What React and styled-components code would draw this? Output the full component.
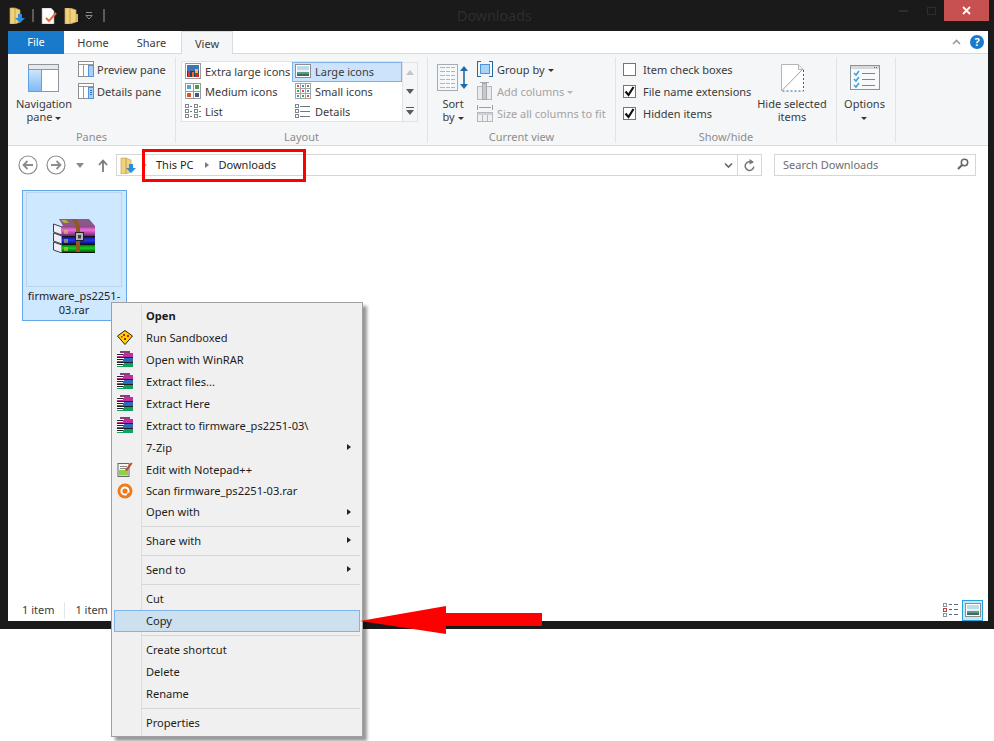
import React from "react";
import styled, { createGlobalStyle } from "styled-components";

const GlobalStyle = createGlobalStyle`
  html, body {
    margin: 0;
    background: #fff;
  }
  body {
    font-family: "Noto Sans", "Open Sans", sans-serif;
    font-size: 11px;
    color: #2b2b2b;
  }
`;

const Page = styled.div`
  position: relative;
  width: 994px;
  height: 741px;
  overflow: hidden;
  background: #fff;
`;

const Win = styled.div`
  display: flex;
  flex-direction: column;
  box-sizing: border-box;
  width: 994px;
  height: 629px;
  padding: 0 6px 8px 8px;
  background: #1a1a1a;
`;

const TitleBar = styled.div`
  display: flex;
  align-items: flex-start;
  height: 31px;
  flex: none;
`;

const Qat = styled.div`
  display: flex;
  align-items: center;
  gap: 7px;
  width: 449px;
  height: 31px;
  padding-left: 1px;
  box-sizing: border-box;
`;

const QatBar = styled.span`
  width: 2px;
  height: 13px;
  background: #5a5a5a;
  margin: 0 ${(p) => p.$gap || 0}px;
`;

const WinTitle = styled.div`
  font-size: 14.3px;
  line-height: 31px;
  color: #2e2e2e;
  flex: 1;
`;

const WinButtons = styled.div`
  display: flex;
  margin-right: -1px;
`;

const WinBtn = styled.div`
  display: flex;
  align-items: center;
  justify-content: center;
  width: ${(p) => p.$w}px;
  height: 21px;
  background: ${(p) => p.$bg || "transparent"};
`;

const Body = styled.div`
  display: flex;
  flex-direction: column;
  flex: 1;
  min-height: 0;
  background: #fff;
`;

const Tabs = styled.div`
  display: flex;
  align-items: stretch;
  height: 23px;
  flex: none;
  box-sizing: border-box;
  border-bottom: 1px solid #dadbdc;
`;

const FileTab = styled.div`
  width: 56px;
  height: 23px;
  background: #1979ca;
  color: #fff;
  text-align: center;
  line-height: 22px;
`;

const Tab = styled.div`
  box-sizing: border-box;
  width: ${(p) => p.$w}px;
  height: 23px;
  text-align: center;
  line-height: 24px;
  color: #3b3b3b;
  ${(p) =>
    p.$active &&
    `
    background: #f5f6f7;
    border: 1px solid #dadbdc;
    border-bottom: none;
  `}
`;

const TabEnd = styled.div`
  margin-left: auto;
  display: flex;
  align-items: center;
  gap: 9px;
  padding-right: 4px;
  height: 22px;
`;

const Help = styled.span`
  display: block;
  width: 14px;
  height: 14px;
  border-radius: 50%;
  background: #1979ca;
  color: #fff;
  font-size: 11px;
  font-weight: 700;
  line-height: 14px;
  text-align: center;
`;

const Ribbon = styled.div`
  display: flex;
  height: 92px;
  flex: none;
  box-sizing: border-box;
  padding-top: 3px;
  background: #f5f6f7;
  border-bottom: 1px solid #dadbdc;
`;

const Group = styled.div`
  display: flex;
  flex-direction: column;
  box-sizing: border-box;
  width: ${(p) => p.$w}px;
  height: 86px;
  border-right: 1px solid #e1e3e6;
`;

const GroupBody = styled.div`
  display: flex;
  flex: 1;
  padding: 2px 0 0 ${(p) => p.$pl || 0}px;
  gap: ${(p) => p.$gap || 0}px;
`;

const GroupLabel = styled.div`
  height: 12px;
  margin-top: ${(p) => (p.$push ? "auto" : 0)};
  line-height: 12px;
  text-align: center;
  color: #8d8d8d;
`;

const BigBtn = styled.div`
  display: flex;
  flex-direction: column;
  align-items: center;
  width: ${(p) => p.$w}px;
  flex: none;
  padding-top: ${(p) => p.$top ?? 5}px;
  box-sizing: border-box;
  color: #3b3b3b;
  line-height: 13px;
  text-align: center;
`;

const BigIcon = styled.div`
  height: 28px;
  margin-bottom: ${(p) => p.$mb ?? 5}px;
  display: flex;
  align-items: flex-start;
`;

const BigText = styled.div`
  white-space: nowrap;
`;

const Caret = styled.span`
  display: inline-block;
  width: 0;
  height: 0;
  margin-left: ${(p) => p.$ml ?? 3}px;
  vertical-align: middle;
  border-left: 3px solid transparent;
  border-right: 3px solid transparent;
  border-top: 3px solid ${(p) => p.$color || "#333"};
`;

const SmallCol = styled.div`
  display: flex;
  flex-direction: column;
  width: ${(p) => p.$w || "auto"};
`;

const SmallRow = styled.div`
  display: flex;
  align-items: center;
  gap: ${(p) => p.$gap ?? 3}px;
  box-sizing: border-box;
  height: 22px;
  padding-bottom: 2px;
  color: ${(p) => (p.$off ? "#a3a3a3" : "#3b3b3b")};
  white-space: nowrap;
`;

const CheckBox = styled.span`
  display: flex;
  align-items: center;
  justify-content: center;
  box-sizing: border-box;
  width: 13px;
  height: 13px;
  background: #fff;
  border: 1px solid #70757f;
`;

const Gallery = styled.div`
  display: flex;
  margin: 5px 0 0 5px;
  height: 60px;
`;

const GalleryGrid = styled.div`
  display: grid;
  grid-template-columns: 110px 110px;
  grid-auto-rows: 20px;
  box-sizing: border-box;
  width: 222px;
  height: 60px;
  background: #fff;
  border: 1px solid #dfe2e6;
  border-width: 0 1px 1px 1px;
  box-shadow: 0 -1px 0 #dfe2e6;
`;

const GalleryItem = styled.div`
  display: flex;
  align-items: center;
  gap: 4px;
  box-sizing: border-box;
  height: 20px;
  padding: 0 0 2px 3px;
  color: #3b3b3b;
  white-space: nowrap;
  ${(p) => p.$on && "background: #cce4fb; box-shadow: inset 0 0 0 1px #7fb2e6;"}
`;

const GalleryScroll = styled.div`
  display: flex;
  flex-direction: column;
  width: 15px;
  height: 60px;
  box-sizing: border-box;
  border: 1px solid #dfe2e6;
  border-left: none;
`;

const ScrollBtn = styled.div`
  display: flex;
  align-items: center;
  justify-content: center;
  flex: 1;
`;

const Address = styled.div`
  display: flex;
  align-items: flex-start;
  height: 39px;
  flex: none;
  box-sizing: border-box;
  padding: 8px 0 0 10px;
  background: #fff;
`;

const NavBtn = styled.div`
  display: flex;
  align-items: center;
  justify-content: center;
  width: ${(p) => p.$w}px;
  height: 22px;
  margin-right: ${(p) => p.$mr || 0}px;
`;

const AddressBox = styled.div`
  display: flex;
  align-items: center;
  box-sizing: border-box;
  width: 646px;
  height: 22px;
  margin-right: 12px;
  padding-left: 3px;
  border: 1px solid #d6d6d6;
`;

const Crumb = styled.span`
  color: #1f1f1f;
  margin-left: ${(p) => p.$ml}px;
  padding-bottom: 2px;
`;

const CrumbArrow = styled.span`
  width: 0;
  height: 0;
  margin-left: ${(p) => p.$ml}px;
  border-top: 3.5px solid transparent;
  border-bottom: 3.5px solid transparent;
  border-left: 4px solid ${(p) => p.$color || "#7a7a7a"};
`;

const AddressEnd = styled.div`
  display: flex;
  align-items: center;
  height: 100%;
  margin-left: auto;
`;

const AddressTool = styled.div`
  display: flex;
  align-items: center;
  justify-content: center;
  width: ${(p) => p.$w}px;
  height: 100%;
  box-sizing: border-box;
  ${(p) => p.$line && "border-left: 1px solid #d6d6d6;"}
`;

const SearchBox = styled.div`
  display: flex;
  align-items: center;
  justify-content: space-between;
  box-sizing: border-box;
  width: 202px;
  height: 22px;
  padding: 0 6px 2px 8px;
  border: 1px solid #d6d6d6;
  color: #6d6d6d;
`;

const Files = styled.div`
  flex: 1;
  min-height: 0;
  padding: 5px 0 0 14px;
`;

const FileItem = styled.div`
  box-sizing: border-box;
  width: 105px;
  height: 131px;
  padding: 1px 4px 0 3px;
  background: #cde8ff;
  border: 1px solid #66a7e8;
`;

const Thumb = styled.div`
  display: flex;
  justify-content: center;
  box-sizing: border-box;
  height: 95px;
  padding-top: 26px;
  border: 1px solid #bcd5eb;
`;

const FileName = styled.div`
  margin-top: 2px;
  line-height: 14px;
  text-align: center;
  color: #222;
  white-space: nowrap;
`;

const StatusBar = styled.div`
  display: flex;
  align-items: center;
  height: 22px;
  flex: none;
  padding: 0 5px 0 14px;
  color: #3b3b3b;
`;

const StatusItem = styled.span`
  display: block;
  padding: 0 10px 2px 0;
  margin-right: 10px;
  ${(p) => p.$line && "border-right: 1px solid #e6e6e6;"}
`;

const ViewBtns = styled.div`
  display: flex;
  align-items: center;
  gap: 4px;
  margin-left: auto;
`;

const ViewOn = styled.div`
  display: flex;
  align-items: center;
  justify-content: center;
  box-sizing: border-box;
  width: 21px;
  height: 21px;
  background: #c6e6f6;
  border: 1px solid #26a0da;
`;

const Menu = styled.div`
  position: absolute;
  left: 111px;
  top: 302px;
  box-sizing: border-box;
  width: 252px;
  height: 435px;
  padding: 2px;
  border: 1px solid #a0a0a0;
  background:
    linear-gradient(#dcdcdc, #dcdcdc) 29px 2px / 1px 431px no-repeat,
    #f0f0f0;
  box-shadow: 4px 4px 3px rgba(0, 0, 0, 0.4);
`;

const MenuRow = styled.div`
  display: flex;
  align-items: center;
  box-sizing: border-box;
  height: ${(p) => p.$h || 22}px;
  padding-bottom: 2px;
  color: #1c1c1c;
  font-size: 11.1px;
  font-weight: ${(p) => (p.$bold ? 700 : 400)};
  ${(p) => p.$on && "background: #cde0f0; border: 1px solid #7eb4ea;"}
`;

const MenuIcon = styled.span`
  display: flex;
  align-items: center;
  justify-content: center;
  flex: none;
  width: 22px;
  height: 16px;
  margin-right: 10px;
  ${(p) => p.$on && "margin-left: -1px;"}
`;

const SubArrow = styled.span`
  margin-left: auto;
  margin-right: 9px;
  width: 0;
  height: 0;
  border-top: 3.5px solid transparent;
  border-bottom: 3.5px solid transparent;
  border-left: 4px solid #222;
`;

const MenuSep = styled.div`
  height: 1px;
  margin: 3px 0 3px 28px;
  background: #d7d7d7;
`;

const RedBox = styled.div`
  position: absolute;
  left: 142px;
  top: 149px;
  width: 164px;
  height: 33px;
  box-sizing: border-box;
  border: 3px solid #f00;
`;

const RedArrow = styled.svg`
  position: absolute;
  left: 360px;
  top: 606px;
`;

const FolderDown = () => (
  <svg width="16" height="17" viewBox="0 0 16 17">
    <path d="M1 1h5l5 2v12l-5 2H1z" fill="#f0d27c" stroke="#c9a550" strokeWidth=".7" />
    <path d="M6 1v16" stroke="#b8953f" strokeWidth=".8" />
    <path d="M9 7h4v4h3l-5 5-5-5h3z" fill="#2b8ce0" />
  </svg>
);

const NotePage = () => (
  <svg width="16" height="16" viewBox="0 0 16 16">
    <path d="M1 0h9l3 3v13H1z" fill="#fff" stroke="#9a9a9a" strokeWidth=".6" />
    <path d="M5 10l3 3 7-8" fill="none" stroke="#e8703a" strokeWidth="2.2" />
  </svg>
);

const FolderPlain = () => (
  <svg width="14" height="16" viewBox="0 0 14 16">
    <path d="M1 0h5l6 2v12l-6 2H1z" fill="#f0d27c" stroke="#c9a550" strokeWidth=".7" />
    <path d="M6 0v16" stroke="#b8953f" strokeWidth=".8" />
    <path d="M12 6h2v8h-2z" fill="#d9b65e" />
  </svg>
);

const QatMore = () => (
  <svg width="8" height="8" viewBox="0 0 8 8">
    <path d="M1 .5h6" stroke="#8a8a8a" />
    <path d="M.8 3.5h6.4L4 7z" fill="none" stroke="#8a8a8a" />
  </svg>
);

const NavPaneIcon = () => (
  <svg width="32" height="28" viewBox="0 0 32 28" shapeRendering="crispEdges">
    <defs>
      <linearGradient id="navBlue" x1="0" y1="0" x2="0" y2="1">
        <stop offset="0" stopColor="#cfe6fc" />
        <stop offset="1" stopColor="#7db9f3" />
      </linearGradient>
    </defs>
    <rect x=".5" y=".5" width="30" height="27" fill="#fff" stroke="#8f959c" />
    <rect x="1" y="1" width="29" height="4" fill="#e6e8ea" />
    <rect x=".5" y="5.5" width="13" height="22" fill="url(#navBlue)" stroke="#5ea2e6" />
    <path d="M1 5.5h30" stroke="#8f959c" />
  </svg>
);

const PaneIcon = ({ lines }) => (
  <svg width="16" height="16" viewBox="0 0 16 16" shapeRendering="crispEdges">
    <rect x=".5" y=".5" width="15" height="15" fill="#fff" stroke="#8f8f8f" />
    <path d="M1 3.5h14M5.5 4v11" stroke="#9a9a9a" />
    <rect x="10.5" y="4.5" width="5" height="11" fill="#a9d0f7" stroke="#4f94dc" />
    {lines && <path d="M12 7.5h2M12 9.5h2M12 11.5h2" stroke="#2f74c0" />}
  </svg>
);

const ExtraLargeIcon = () => (
  <svg width="16" height="16" viewBox="0 0 16 16" shapeRendering="crispEdges">
    <rect x=".5" y=".5" width="15" height="15" fill="#fff" stroke="#9a9a9a" />
    <rect x="2" y="2" width="12" height="6" fill="#3f74b8" />
    <rect x="2" y="8" width="12" height="6" fill="#26406e" />
    <rect x="3" y="8" width="2" height="6" fill="#d83a2a" />
    <rect x="7" y="9" width="2" height="5" fill="#e8702a" />
    <rect x="10" y="6" width="3" height="4" fill="#f0c040" />
    <rect x="10" y="10" width="4" height="4" fill="#c82a2a" />
  </svg>
);

const LargeIcon = () => (
  <svg width="16" height="14" viewBox="0 0 16 14" shapeRendering="crispEdges">
    <rect x=".5" y=".5" width="15" height="13" fill="#fff" stroke="#8d8d8d" />
    <rect x="2" y="2" width="12" height="4" fill="#bcdcec" />
    <rect x="2" y="6" width="12" height="2" fill="#e8f2f4" />
    <rect x="2" y="8" width="12" height="2" fill="#5a9a88" />
    <rect x="2" y="10" width="12" height="2" fill="#3f6a60" />
  </svg>
);

const MediumIcon = () => (
  <svg width="16" height="16" viewBox="0 0 16 16" shapeRendering="crispEdges">
    <rect x=".5" y=".5" width="15" height="15" fill="#fff" stroke="#9a9a9a" />
    <path d="M8 0v16M0 8h16" stroke="#9a9a9a" />
    <rect x="2" y="2" width="4" height="4" fill="#5aa0d8" />
    <rect x="10" y="2" width="4" height="4" fill="#4a9a50" />
    <rect x="2" y="10" width="4" height="4" fill="#d8552a" />
    <rect x="10" y="10" width="4" height="4" fill="#3a5a8a" />
  </svg>
);

const SmallIconsIcon = () => (
  <svg width="16" height="16" viewBox="0 0 16 16" shapeRendering="crispEdges">
    <path d="M.5.5h15v15H.5zM5.500 0v16M10.500 0v16M0 5.500h16M0 10.500h16" fill="#fff" stroke="#a5a5a5" />
    {[2, 7, 12].map((y) =>
      [2, 7, 12].map((x, i) => (
        <rect
          key={`${x}-${y}`}
          x={x}
          y={y}
          width="2"
          height="2"
          fill={["#3f8ad0", "#4aa050", "#d8552a"][(i + y) % 3]}
        />
      ))
    )}
  </svg>
);

const ListRows = ({ cols }) => (
  <svg width="16" height="16" viewBox="0 0 16 16" shapeRendering="crispEdges">
    {[1, 6, 11].map((y) =>
      cols.map((x) => (
        <g key={`${x}-${y}`}>
          <rect x={x + 0.5} y={y + 0.5} width="3" height="3" fill="#fff" stroke="#7d8791" />
          <path d={`M${x + 5} ${y + 2.5}h${cols.length > 1 ? 2 : 10}`} stroke="#6f7882" />
        </g>
      ))
    )}
  </svg>
);

const Tri = ({ dir, color }) => (
  <svg width="8" height="5" viewBox="0 0 8 5">
    <path d={dir === "up" ? "M0 5h8L4 0z" : "M0 0h8L4 5z"} fill={color} />
  </svg>
);

const MoreTri = () => (
  <svg width="8" height="8" viewBox="0 0 8 8">
    <path d="M0 0h8v1H0zM0 3h8L4 8z" fill="#5a5a5a" />
  </svg>
);

const SortIcon = () => (
  <svg width="32" height="28" viewBox="0 0 32 28">
    <g shapeRendering="crispEdges">
      <rect x=".5" y=".5" width="20" height="26" fill="#f4f7fa" stroke="#a7adb3" />
      {[3, 7, 11, 15, 19, 23].map((y) => (
        <path key={y} d={`M3 ${y + 0.5}h15`} stroke="#8fc0e8" />
      ))}
      <path d="M8.5 3v21M13.5 3v21" stroke="#fff" />
    </g>
    <path d="M27 3v21" stroke="#1f6aa8" strokeWidth="1.6" />
    <path d="M23 7l4-5 4 5M23 20l4 5 4-5" fill="#1f6aa8" />
  </svg>
);

const GroupByIcon = () => (
  <svg width="16" height="16" viewBox="0 0 16 16" shapeRendering="crispEdges">
    <path d="M4 .5H.5v15H4M12 .5h3.5v15H12" fill="none" stroke="#1f6aa8" />
    <rect x="3.5" y="3.5" width="9" height="9" fill="#a9d4f7" stroke="#4f94dc" />
  </svg>
);

const AddColumnsIcon = () => (
  <svg width="16" height="18" viewBox="0 0 16 18" shapeRendering="crispEdges">
    <rect x=".5" y="4.5" width="14" height="13" fill="#e8eaec" stroke="#b4b8bc" />
    <rect x="5.5" y="1.5" width="4" height="16" fill="#c5c9ce" stroke="#a6aaae" />
    <path d="M3 .5h9" stroke="#a6aaae" />
  </svg>
);

const SizeColumnsIcon = () => (
  <svg width="16" height="17" viewBox="0 0 16 17" shapeRendering="crispEdges">
    <path d="M.5 0v5M15.5 0v5M2 2.5h12" stroke="#9aa0a6" />
    <rect x=".5" y="7.5" width="15" height="9" fill="#eef0f2" stroke="#b4b8bc" />
    <path d="M5.500 8v8M10.500 8v8" stroke="#b4b8bc" />
    <rect x="1" y="8" width="14" height="2" fill="#cfd3d7" />
  </svg>
);

const Check = () => (
  <svg width="11" height="11" viewBox="0 0 11 11">
    <path d="M1.5 5.5l3 3.500 5-8" fill="none" stroke="#111" strokeWidth="2.2" />
  </svg>
);

const HideIcon = () => (
  <svg width="23" height="28" viewBox="0 0 23 28">
    <path d="M.5.5h17l5 5v21H.5z" fill="#fff" />
    <path d="M.5 27V.5h17l5 5" fill="none" stroke="#b5b5b5" />
    <path d="M17.500.5v5h5" fill="#eee" stroke="#b5b5b5" />
    <path d="M22.500 6v21H1" fill="none" stroke="#1f6aa8" strokeDasharray="2 2" />
    <path d="M1 26.500L21 6" stroke="#a0a0a0" />
  </svg>
);

const OptionsIcon = () => (
  <svg width="30" height="25" viewBox="0 0 30 25" shapeRendering="crispEdges">
    <rect x=".5" y=".5" width="29" height="24" fill="#f8f9fa" stroke="#8d9399" />
    <rect x="1" y="1" width="28" height="3" fill="#d6d9dc" />
    <path d="M24 2.500h1M26 2.500h1" stroke="#666" />
    <g shapeRendering="auto" fill="none" stroke="#3ea0e0" strokeWidth="1.5">
      <path d="M4 8l2 2 3-4M4 14l2 2 3-4M4 20l2 2 3-4" />
    </g>
    <path d="M12 8.500h13M12 14.500h13M12 20.500h13" stroke="#7d868e" />
  </svg>
);

const CircleArrow = ({ flip }) => (
  <svg width="20" height="20" viewBox="0 0 20 20">
    <g transform={flip ? "rotate(180 10 10)" : undefined} fill="none" stroke="#8d8d8d">
      <circle cx="10" cy="10" r="9" strokeWidth="1.2" />
      <path d="M15 10H6M9.500 6L5.500 10l4 4" strokeWidth="1.8" />
    </g>
  </svg>
);

const UpArrow = () => (
  <svg width="10" height="13" viewBox="0 0 10 13">
    <path d="M5 13V2M1 6l4-4.500L9 6" fill="none" stroke="#7a7a7a" strokeWidth="1.8" />
  </svg>
);

const ChevronDown = () => (
  <svg width="9" height="7" viewBox="0 0 9 7">
    <path d="M1 1.500l3.500 3.500L8 1.500" fill="none" stroke="#666" strokeWidth="1.600" />
  </svg>
);

const ChevronUp = () => (
  <svg width="9" height="6" viewBox="0 0 9 6">
    <path d="M1 5l3.500-3.500L8 5" fill="none" stroke="#9a9a9a" strokeWidth="1.600" />
  </svg>
);

const Refresh = () => (
  <svg width="11" height="13" viewBox="0 0 11 13">
    <path d="M8.500 4A4.300 4.300 0 1 0 9.800 7.500" fill="none" stroke="#777" strokeWidth="1.500" />
    <path d="M5.500 0v5.500L10 3z" fill="#777" />
  </svg>
);

const SearchGlass = () => (
  <svg width="12" height="12" viewBox="0 0 12 12">
    <circle cx="7.500" cy="4.500" r="3.200" fill="none" stroke="#666" strokeWidth="1.500" />
    <path d="M5 7l-4 4" stroke="#666" strokeWidth="2.200" />
  </svg>
);

const RarLarge = () => (
  <svg width="42" height="34" viewBox="0 0 42 34">
    <defs>
      <linearGradient id="pk" x1="0" y1="0" x2="0" y2="1">
        <stop offset="0" stopColor="#8a3f82" />
        <stop offset=".4" stopColor="#ee70dc" />
        <stop offset="1" stopColor="#6e2468" />
      </linearGradient>
      <linearGradient id="bl" x1="0" y1="0" x2="0" y2="1">
        <stop offset="0" stopColor="#12128e" />
        <stop offset=".45" stopColor="#2438f0" />
        <stop offset="1" stopColor="#0c0c70" />
      </linearGradient>
      <linearGradient id="gr" x1="0" y1="0" x2="0" y2="1">
        <stop offset="0" stopColor="#0a7a12" />
        <stop offset=".45" stopColor="#12d020" />
        <stop offset="1" stopColor="#065a08" />
      </linearGradient>
    </defs>
    {[0, 9, 18].map((o) => (
      <path
        key={o}
        d={`M.5 ${5 + o}L9 ${8 + o}v8L.5 ${13 + o}z`}
        fill="#f0edf8"
        stroke="#2a2a2a"
        strokeWidth=".9"
      />
    ))}
    <path d="M6 0h30l6 7H10z" fill="#8a5a86" />
    <path d="M8 1h5l3 3h-5z" fill="#b0b040" />
    <rect x="9" y="7" width="33" height="10" fill="url(#pk)" />
    <rect x="9" y="18" width="33" height="7" fill="url(#bl)" />
    <rect x="9" y="26" width="33" height="7" fill="url(#gr)" />
    <path d="M9 17.500h33M9 25.500h33M9 33.500h33" stroke="#111" />
    <path d="M12 11v4M14 11v4M12 20v4M14 20v4M12 28v4M14 28v4" stroke="#e0d860" />
    <path d="M19 0h4c2 3 4 5 4 9v24h-4V10c0-4-2-6-4-10z" fill="#8e5a1e" />
    <rect x="22.500" y="13.500" width="8" height="8" fill="#b8b8b8" stroke="#222" />
    <rect x="25" y="16" width="3" height="3.500" fill="#444" />
  </svg>
);

const RarSmall = () => (
  <svg width="17" height="16" viewBox="0 0 17 16" shapeRendering="crispEdges">
    <rect x="3" y="0" width="10" height="2" fill="#8e3a7e" />
    <rect x="0" y="2" width="16" height="4" fill="#c0309a" />
    <rect x="0" y="7" width="16" height="4" fill="#2a6ac0" />
    <rect x="0" y="12" width="16" height="4" fill="#10a060" />
    <path d="M0 2.500h7M0 4.500h6M0 7.500h7M0 9.500h6M0 12.500h7M0 14.500h6" stroke="#fff" />
    <path d="M0 3.500h6M0 8.500h6M0 13.500h6M0 6.500h16M0 11.500h16" stroke="#222" />
  </svg>
);

const SandboxIcon = () => (
  <svg width="16" height="15" viewBox="0 0 16 15">
    <path d="M8 .500L15.500 6 8 14.500.500 6z" fill="#ffd400" stroke="#222" strokeWidth="1" />
    <path d="M6 4h2v2H6zM10 5h2v2h-2zM7 8h2v2H7zM4 6h1.500v1.500H4z" fill="#d81010" />
  </svg>
);

const NotepadIcon = () => (
  <svg width="16" height="16" viewBox="0 0 16 16">
    <rect x="1" y="2.500" width="11" height="13" fill="#f4f4e8" stroke="#666" />
    <rect x="2" y="9" width="9" height="5.500" fill="#8fd04a" />
    <path d="M3 5.500h7M3 7.500h7" stroke="#888" />
    <path d="M8 9L14 1.500l1.500 1L10 10z" fill="#c8402a" />
  </svg>
);

const AvastIcon = () => (
  <svg width="16" height="16" viewBox="0 0 16 16">
    <circle cx="8" cy="8" r="7.500" fill="#ee7a1e" />
    <circle cx="8" cy="8" r="3.600" fill="#f07a1a" stroke="#fff" strokeWidth="2" />
    <path d="M10.500 10.500l2.500 2.500" stroke="#ee7a1e" strokeWidth="2.500" />
  </svg>
);

const DetailsMini = () => (
  <svg width="15" height="15" viewBox="0 0 15 15" shapeRendering="crispEdges">
    {[0.5, 5.5, 10.5].map((y, i) => (
      <g key={y}>
        <rect x=".5" y={y} width="3" height="3" fill="#fff" stroke={i === 1 ? "#c04040" : "#8794a0"} />
        <path d={`M6 ${y + 1}h3M11 ${y + 1}h4`} stroke="#5a6a7a" />
      </g>
    ))}
  </svg>
);

const menuItems = [
  { label: "Open", bold: true },
  { label: "Run Sandboxed", icon: <SandboxIcon /> },
  { label: "Open with WinRAR", icon: <RarSmall /> },
  { label: "Extract files...", icon: <RarSmall /> },
  { label: "Extract Here", icon: <RarSmall /> },
  { label: "Extract to firmware_ps2251-03\\", icon: <RarSmall /> },
  { label: "7-Zip", sub: true },
  { label: "Edit with Notepad++", icon: <NotepadIcon /> },
  { label: "Scan firmware_ps2251-03.rar", icon: <AvastIcon />, h: 21 },
  { label: "Open with", sub: true, h: 21 },
  { sep: true },
  { label: "Share with", sub: true },
  { sep: true },
  { label: "Send to", sub: true },
  { sep: true },
  { label: "Cut" },
  { label: "Copy", on: true },
  { sep: true },
  { label: "Create shortcut" },
  { label: "Delete" },
  { label: "Rename" },
  { sep: true },
  { label: "Properties" },
];

const galleryItems = [
  { label: "Extra large icons", icon: <ExtraLargeIcon /> },
  { label: "Large icons", icon: <LargeIcon />, on: true },
  { label: "Medium icons", icon: <MediumIcon /> },
  { label: "Small icons", icon: <SmallIconsIcon /> },
  { label: "List", icon: <ListRows cols={[0, 9]} /> },
  { label: "Details", icon: <ListRows cols={[0]} /> },
];

export default function App() {
  return (
    <Page>
      <GlobalStyle />
      <Win>
        <TitleBar>
          <Qat>
            <FolderDown />
            <QatBar />
            <NotePage />
            <FolderPlain />
            <QatMore />
            <QatBar $gap={3} />
          </Qat>
          <WinTitle>Downloads</WinTitle>
          <WinButtons>
            <WinBtn $w={32}>
              <svg width="9" height="2" viewBox="0 0 9 2">
                <rect width="9" height="2" fill="#2e2e2e" />
              </svg>
            </WinBtn>
            <WinBtn $w={25}>
              <svg width="9" height="8" viewBox="0 0 9 8">
                <rect x=".5" y=".5" width="8" height="7" fill="none" stroke="#2e2e2e" />
              </svg>
            </WinBtn>
            <WinBtn $w={45} $bg="#c75050">
              <svg width="9" height="9" viewBox="0 0 9 9">
                <path d="M1 1l7 7M8 1L1 8" stroke="#fff" strokeWidth="1.800" />
              </svg>
            </WinBtn>
          </WinButtons>
        </TitleBar>
        <Body>
          <Tabs>
            <FileTab>File</FileTab>
            <Tab $w={58}>Home</Tab>
            <Tab $w={59}>Share</Tab>
            <Tab $w={52} $active>
              View
            </Tab>
            <TabEnd>
              <ChevronUp />
              <Help>?</Help>
            </TabEnd>
          </Tabs>
          <Ribbon>
            <Group $w={168}>
              <GroupBody $pl={4} $gap={2}>
                <BigBtn $w={64}>
                  <BigIcon>
                    <NavPaneIcon />
                  </BigIcon>
                  <BigText>
                    Navigation
                    <br />
                    pane
                    <Caret />
                  </BigText>
                </BigBtn>
                <SmallCol>
                  <SmallRow>
                    <PaneIcon />
                    Preview pane
                  </SmallRow>
                  <SmallRow>
                    <PaneIcon lines />
                    Details pane
                  </SmallRow>
                </SmallCol>
              </GroupBody>
              <GroupLabel>Panes</GroupLabel>
            </Group>
            <Group $w={252}>
              <Gallery>
                <GalleryGrid>
                  {galleryItems.map((item) => (
                    <GalleryItem key={item.label} $on={item.on}>
                      {item.icon}
                      {item.label}
                    </GalleryItem>
                  ))}
                </GalleryGrid>
                <GalleryScroll>
                  <ScrollBtn>
                    <Tri dir="up" color="#c4c4c4" />
                  </ScrollBtn>
                  <ScrollBtn>
                    <Tri dir="down" color="#5a5a5a" />
                  </ScrollBtn>
                  <ScrollBtn>
                    <MoreTri />
                  </ScrollBtn>
                </GalleryScroll>
              </Gallery>
              <GroupLabel $push>Layout</GroupLabel>
            </Group>
            <Group $w={188}>
              <GroupBody $pl={7} $gap={6}>
                <BigBtn $w={36}>
                  <BigIcon>
                    <SortIcon />
                  </BigIcon>
                  <BigText>
                    Sort
                    <br />
                    by
                    <Caret />
                  </BigText>
                </BigBtn>
                <SmallCol>
                  <SmallRow $gap={4}>
                    <GroupByIcon />
                    <span>
                      Group by
                      <Caret />
                    </span>
                  </SmallRow>
                  <SmallRow $gap={4} $off>
                    <AddColumnsIcon />
                    <span>
                      Add columns
                      <Caret $color="#b5b5b5" />
                    </span>
                  </SmallRow>
                  <SmallRow $gap={4} $off>
                    <SizeColumnsIcon />
                    Size all columns to fit
                  </SmallRow>
                </SmallCol>
              </GroupBody>
              <GroupLabel>Current view</GroupLabel>
            </Group>
            <Group $w={221}>
              <GroupBody $pl={7}>
                <SmallCol $w="131px">
                  <SmallRow $gap={7}>
                    <CheckBox />
                    Item check boxes
                  </SmallRow>
                  <SmallRow $gap={7}>
                    <CheckBox>
                      <Check />
                    </CheckBox>
                    File name extensions
                  </SmallRow>
                  <SmallRow $gap={7}>
                    <CheckBox>
                      <Check />
                    </CheckBox>
                    Hidden items
                  </SmallRow>
                </SmallCol>
                <BigBtn $w={76}>
                  <BigIcon>
                    <HideIcon />
                  </BigIcon>
                  <BigText>
                    Hide selected
                    <br />
                    items
                  </BigText>
                </BigBtn>
              </GroupBody>
              <GroupLabel>Show/hide</GroupLabel>
            </Group>
            <Group $w={59}>
              <GroupBody>
                <BigBtn $w={55} $top={6}>
                  <BigIcon $mb={4}>
                    <OptionsIcon />
                  </BigIcon>
                  <BigText>
                    Options
                    <br />
                    <Caret $ml={0} />
                  </BigText>
                </BigBtn>
              </GroupBody>
            </Group>
          </Ribbon>
          <Address>
            <NavBtn $w={20} $mr={8}>
              <CircleArrow />
            </NavBtn>
            <NavBtn $w={20} $mr={6}>
              <CircleArrow flip />
            </NavBtn>
            <NavBtn $w={16} $mr={7}>
              <Tri dir="down" color="#8a8a8a" />
            </NavBtn>
            <NavBtn $w={16} $mr={5}>
              <UpArrow />
            </NavBtn>
            <AddressBox>
              <FolderDown />
              <CrumbArrow $ml={7} $color="#b5b5b5" />
              <Crumb $ml={9}>This PC</Crumb>
              <CrumbArrow $ml={11} />
              <Crumb $ml={10}>Downloads</Crumb>
              <AddressEnd>
                <AddressTool $w={17}>
                  <ChevronDown />
                </AddressTool>
                <AddressTool $w={24} $line>
                  <Refresh />
                </AddressTool>
              </AddressEnd>
            </AddressBox>
            <SearchBox>
              Search Downloads
              <SearchGlass />
            </SearchBox>
          </Address>
          <Files>
            <FileItem>
              <Thumb>
                <RarLarge />
              </Thumb>
              <FileName>
                firmware_ps2251-
                <br />
                03.rar
              </FileName>
            </FileItem>
          </Files>
          <StatusBar>
            <StatusItem $line>1 item</StatusItem>
            <StatusItem>1 item</StatusItem>
            <ViewBtns>
              <DetailsMini />
              <ViewOn>
                <LargeIcon />
              </ViewOn>
            </ViewBtns>
          </StatusBar>
        </Body>
      </Win>
      <Menu>
        {menuItems.map((item, i) =>
          item.sep ? (
            <MenuSep key={i} />
          ) : (
            <MenuRow key={item.label} $bold={item.bold} $on={item.on} $h={item.h}>
              <MenuIcon $on={item.on}>{item.icon}</MenuIcon>
              {item.label}
              {item.sub && <SubArrow />}
            </MenuRow>
          )
        )}
      </Menu>
      <RedBox />
      <RedArrow width="182" height="28" viewBox="0 0 182 28">
        <path d="M0 15L86 0v7h96v13H86v8z" fill="#f00" />
      </RedArrow>
    </Page>
  );
}
